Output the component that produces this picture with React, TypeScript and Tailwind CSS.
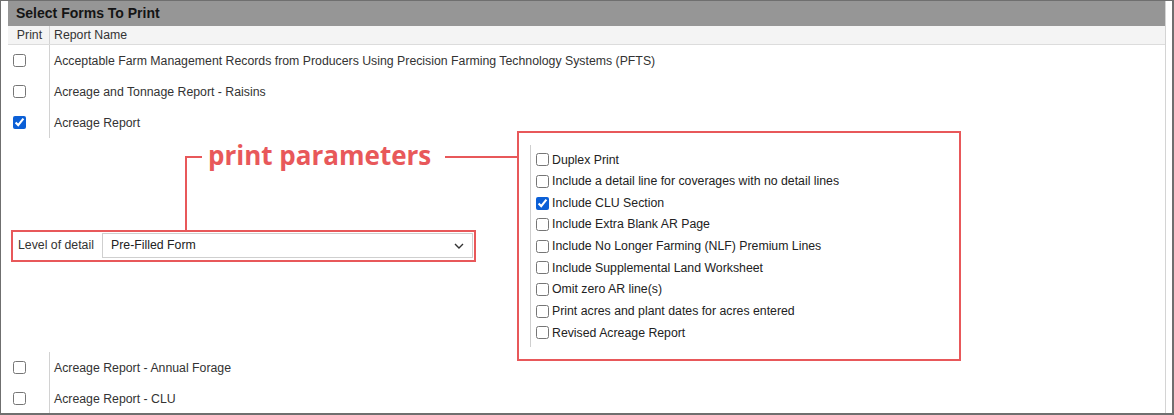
import React from "react";

interface Report {
  id: string;
  name: string;
  checked?: boolean;
}

const topReports: Report[] = [
  {
    id: "pfts",
    name: "Acceptable Farm Management Records from Producers Using Precision Farming Technology Systems (PFTS)",
  },
  { id: "raisins", name: "Acreage and Tonnage Report - Raisins" },
  { id: "acreage", name: "Acreage Report", checked: true },
];

const bottomReports: Report[] = [
  { id: "forage", name: "Acreage Report - Annual Forage" },
  { id: "clu", name: "Acreage Report - CLU" },
];

const params = [
  { label: "Duplex Print" },
  { label: "Include a detail line for coverages with no detail lines" },
  { label: "Include CLU Section", checked: true },
  { label: "Include Extra Blank AR Page" },
  { label: "Include No Longer Farming (NLF) Premium Lines" },
  { label: "Include Supplemental Land Worksheet" },
  { label: "Omit zero AR line(s)" },
  { label: "Print acres and plant dates for acres entered" },
  { label: "Revised Acreage Report" },
];

const Check = ({ checked }: { checked?: boolean }) => (
  <input
    type="checkbox"
    defaultChecked={checked}
    className="m-0 w-[13px] h-[13px] accent-[#0b5fd6] shrink-0"
  />
);

const ReportRow = ({ report }: { report: Report }) => (
  <div className="flex h-[31px]">
    <div className="w-[42px] border-r border-[#d2d2d2] pl-[5px] flex items-center">
      <Check checked={report.checked} />
    </div>
    <div className="pl-[4px] pt-[2px] flex items-center text-[#333]">{report.name}</div>
  </div>
);

export default function App() {
  return (
    <div className="relative w-[1174px] h-[415px] overflow-hidden bg-white border-t border-l border-r-2 border-b-2 border-[#6f6f6f] pl-[7px] pr-[6px] font-['Liberation_Sans',Arial,sans-serif] text-[12.3px]">
      <div className="h-full border-r border-[#d4d4d4]">
        {/* Title bar */}
        <div className="h-[25px] bg-[#969696] px-2 flex items-center font-bold text-[14px] text-[#141414]">
          Select Forms To Print
        </div>

        {/* Column header */}
        <div className="flex h-[19px] bg-[#f4f4f4] border-b border-[#dcdcdc] text-[#333]">
          <div className="w-[42px] border-r border-[#d2d2d2] flex items-center justify-center pl-[2px]">
            Print
          </div>
          <div className="pl-[4px] flex items-center">Report Name</div>
        </div>

        {topReports.map((r) => (
          <ReportRow key={r.id} report={r} />
        ))}

        {/* Print parameters for Acreage Report */}
        <div className="flex h-[214px]">
          <div className="w-[522px] pl-[10px] flex items-center pt-[1px]">
            <span className="w-[84px] text-[#333]">Level of detail</span>
            <div className="w-[371px] h-[25px] border border-[#cfcfcf] flex items-center justify-between pl-[8px] pr-[8px] text-[#222]">
              <span>Pre-Filled Form</span>
              <svg width="10" height="6" viewBox="0 0 10 6" fill="none">
                <path d="M1 1l4 4 4-4" stroke="#333" strokeWidth="1.4" />
              </svg>
            </div>
          </div>
          <div className="mt-[7px] mb-[5px] border-l border-[#cfcfcf] pl-[5px] pt-[4px] pb-[3px]">
            {params.map((p) => (
              <label key={p.label} className="flex items-center h-[21.625px] text-[#222]">
                <Check checked={p.checked} />
                <span className="ml-[3px]">{p.label}</span>
              </label>
            ))}
          </div>
        </div>

        {bottomReports.map((r) => (
          <ReportRow key={r.id} report={r} />
        ))}
      </div>

      {/* Annotation overlay */}
      <div className="absolute left-[10px] top-[229px] w-[465px] h-[32px] border-2 border-[#e8585a]" />
      <div className="absolute left-[516px] top-[130px] w-[444px] h-[230px] border-2 border-[#e8585a]" />
      <div className="absolute left-[184px] top-[155px] w-[2px] h-[75px] bg-[#e8585a]" />
      <div className="absolute left-[184px] top-[155px] w-[17px] h-[2px] bg-[#e8585a]" />
      <div className="absolute left-[444px] top-[155px] w-[73px] h-[2px] bg-[#e8585a]" />
      <div className="absolute left-[207px] top-[141px] leading-[26px] text-[26px] font-bold text-[#e8585a] font-['Open_Sans',sans-serif]">
        print parameters
      </div>
    </div>
  );
}
